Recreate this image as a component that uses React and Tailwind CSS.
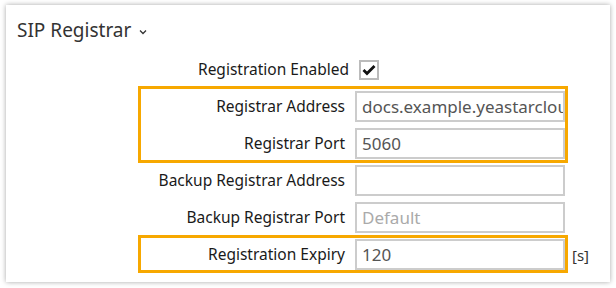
export default function App() {
  const font = { fontFamily: '"Noto Sans", "Open Sans", sans-serif' };
  const Row = ({ label, children }) => (
    <div className="flex items-center h-[31px]">
      <div className="flex-1 text-right pr-[10px] text-[15.5px] text-[#1a1a1a] whitespace-nowrap">{label}</div>
      {children}
    </div>
  );
  const Input = ({ value, placeholder }) => (
    <div className="w-[210px] h-[31px] border-2 border-[#cccccc] bg-white px-[5px] flex items-center text-[17px] overflow-hidden whitespace-nowrap">
      {value ? <span className="text-[#555]">{value}</span> : <span className="text-[#aaa]">{placeholder}</span>}
    </div>
  );
  return (
    <div className="w-[616px] h-[288px] bg-white p-[6px] pt-[5px]" style={font}>
      <div className="w-[604px] h-[277px] bg-white shadow-[0_0_5px_rgba(0,0,0,0.35)]">
        <div className="flex items-center pl-[11px] pt-[11px] h-[40px]">
          <span className="text-[19px] text-[#333] leading-none">SIP Registrar</span>
          <svg className="ml-[8px] mt-[3px]" width="8" height="6" viewBox="0 0 8 6">
            <path d="M1 1.5 L4 4.5 L7 1.5" fill="none" stroke="#333" strokeWidth="1.3" />
          </svg>
        </div>
        <div className="ml-[132px] w-[430px] mt-[15px]">
          <div className="flex items-center h-[20px]">
            <div className="flex-1 text-right pr-[10px] text-[15.5px] text-[#1a1a1a]">Registration Enabled</div>
            <div className="w-[20px] h-[20px] border-2 border-[#bbbbbb] flex items-center justify-center mr-[189px]">
              <svg width="14" height="12" viewBox="0 0 14 12">
                <path d="M1.5 6 L5 9.5 L12.5 2" fill="none" stroke="#111" strokeWidth="2.8" />
              </svg>
            </div>
          </div>
          <div className="mt-[6px] border-[3px] border-[#f7a800] pt-[2px] pb-[1px] flex flex-col gap-[6px]">
            <Row label="Registrar Address">
              <Input value="docs.example.yeastarcloud.com" />
            </Row>
            <Row label="Registrar Port">
              <Input value="5060" />
            </Row>
          </div>
          <div className="border-x-[3px] border-transparent pt-[2px] flex flex-col gap-[6px]">
            <Row label="Backup Registrar Address">
              <Input value="" />
            </Row>
            <Row label="Backup Registrar Port">
              <Input value="" placeholder="Default" />
            </Row>
          </div>
          <div className="relative mt-[2px] border-[3px] border-[#f7a800] pt-[1px]">
            <Row label="Registration Expiry">
              <Input value="120" />
            </Row>
            <span className="absolute left-[431px] top-[6px] text-[15px] text-[#333]">[s]</span>
          </div>
        </div>
      </div>
    </div>
  );
}
